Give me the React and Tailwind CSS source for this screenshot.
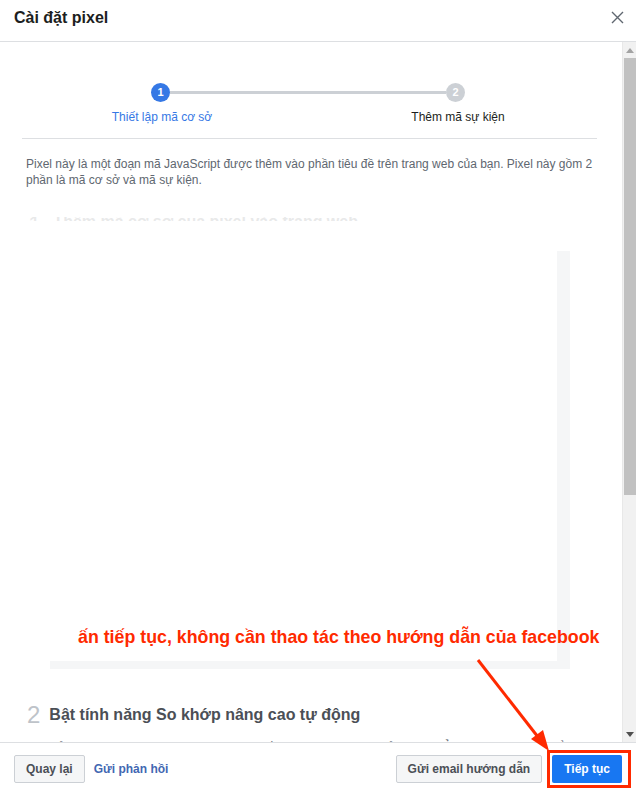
import React from "react";

const RED = "#ff2a00";

const Scrollbar = () => (
  <div className="w-[14px] bg-[#f1f1f1] flex flex-col items-center border-l border-[#e8e8e8]">
    <div className="h-[16px] flex items-center justify-center">
      <svg width="8" height="5" viewBox="0 0 8 5">
        <path d="M0 5 L4 0 L8 5 Z" fill="#a3a3a3" />
      </svg>
    </div>
    <div className="w-[12px] h-[437px] bg-[#c1c1c1]" />
    <div className="flex-1" />
    <div className="h-[16px] flex items-center justify-center">
      <svg width="8" height="5" viewBox="0 0 8 5">
        <path d="M0 0 L4 5 L8 0 Z" fill="#505050" />
      </svg>
    </div>
  </div>
);

const Stepper = () => (
  <div className="pt-[41px]">
    <div className="flex items-center ml-[151px]">
      <div className="w-[19px] h-[19px] rounded-full bg-[#3578e5] text-white text-[11px] font-bold flex items-center justify-center">
        1
      </div>
      <div className="w-[276px] h-[3px] bg-[#ccd0d5]" />
      <div className="w-[19px] h-[19px] rounded-full bg-[#ccd0d5] text-white text-[11px] font-bold flex items-center justify-center">
        2
      </div>
    </div>
    <div className="flex mt-[7px] text-[12px] leading-[16px]">
      <div className="ml-[80px] w-[164px] text-center text-[#3578e5]">
        Thiết lập mã cơ sở
      </div>
      <div className="ml-[132px] w-[164px] text-center text-[#1c1e21]">
        Thêm mã sự kiện
      </div>
    </div>
    <div className="ml-[22px] w-[575px] mt-[13px] border-t border-[#dddfe2]" />
  </div>
);

export default function App() {
  return (
    <div
      className="relative w-[636px] h-[793px] bg-white flex flex-col overflow-hidden"
      style={{ fontFamily: '"Liberation Sans", Arial, sans-serif' }}
    >
      {/* Header */}
      <div className="h-[42px] shrink-0 border-b border-[#dddfe2] flex items-center justify-between pl-[14px] pr-[12px]">
        <h1 className="text-[16px] font-bold text-[#1c1e21] -mt-[5px]">
          Cài đặt pixel
        </h1>
        <svg width="13" height="13" viewBox="0 0 13 13" className="-mt-[6px]">
          <path
            d="M1 1 L12 12 M12 1 L1 12"
            stroke="#606770"
            strokeWidth="1.4"
          />
        </svg>
      </div>

      {/* Body */}
      <div className="flex-1 flex min-h-0">
        <div className="flex-1 overflow-hidden">
          <Stepper />

          <p className="mt-[17px] pl-[26px] pr-[26px] text-[12px] leading-[16px] text-[#606770]">
            Pixel này là một đoạn mã JavaScript được thêm vào phần tiêu đề
            trên trang web của bạn. Pixel này gồm 2 phần là mã cơ sở và mã sự
            kiện.
          </p>

          {/* faded step 1 heading, mostly hidden */}
          <div className="mt-[29px] h-[4px] overflow-hidden pl-[28px] flex gap-[12px] opacity-[0.12]">
            <span className="text-[24px] leading-[24px] text-[#4b4f56] -mt-[4px]">
              1
            </span>
            <span className="text-[16px] leading-[20px] font-bold text-[#4b4f56] -mt-[5px]">
              Thêm mã cơ sở của pixel vào trang web
            </span>
          </div>

          <div className="mt-[30px] ml-[50px] w-[520px] bg-[#f5f6f7] pr-[13px] pb-[8px]">
            <div className="h-[410px] bg-white" />
          </div>

          <div className="mt-[34px] pl-[27px] flex items-center gap-[9px]">
            <span className="text-[24px] leading-[24px] text-[#bec3c9]">
              2
            </span>
            <h2 className="text-[16px] font-bold text-[#4b4f56]">
              Bật tính năng So khớp nâng cao tự động
            </h2>
          </div>
          <p className="mt-[12px] pl-[50px] pr-[40px] text-[12px] leading-[16px] text-[#606770]">
            Sử dụng thông tin khách hàng đã cung cấp cho doanh nghiệp của bạn,
            chẳng hạn như email, để chỉ
          </p>
        </div>
        <Scrollbar />
      </div>

      {/* Footer */}
      <div className="h-[51px] shrink-0 border-t border-[#dddfe2] flex items-start pt-[12px] px-[14px]">
        <button className="h-[28px] px-[11px] rounded-[2px] border border-[#ccd0d5] bg-[#f5f6f7] text-[12px] font-bold text-[#4b4f56]">
          Quay lại
        </button>
        <a className="ml-[9px] h-[28px] flex items-center text-[12px] font-bold text-[#4267b2]">
          Gửi phản hồi
        </a>
        <div className="flex-1" />
        <button className="h-[28px] px-[11px] rounded-[2px] border border-[#ccd0d5] bg-[#f5f6f7] text-[12px] font-bold text-[#4b4f56]">
          Gửi email hướng dẫn
        </button>
        <button className="ml-[10px] h-[28px] px-[12px] rounded-[2px] bg-[#1877f2] text-[12px] font-bold text-white">
          Tiếp tục
        </button>
      </div>

      {/* Annotation overlay */}
      <div
        className="absolute left-[78px] top-[626px] text-[17.8px] leading-[22px] font-bold whitespace-nowrap"
        style={{ color: RED }}
      >
        ấn tiếp tục, không cần thao tác theo hướng dẫn của facebook
      </div>
      <div
        className="absolute left-[547px] top-[750px] w-[84px] h-[38px] border-[3px]"
        style={{ borderColor: RED }}
      />
      <svg
        className="absolute left-0 top-0 pointer-events-none"
        width="636"
        height="793"
      >
        <line
          x1="478"
          y1="660"
          x2="538"
          y2="737"
          stroke={RED}
          strokeWidth="3"
        />
        <path d="M549 751 L531 739 L543 730 Z" fill={RED} />
      </svg>
    </div>
  );
}
